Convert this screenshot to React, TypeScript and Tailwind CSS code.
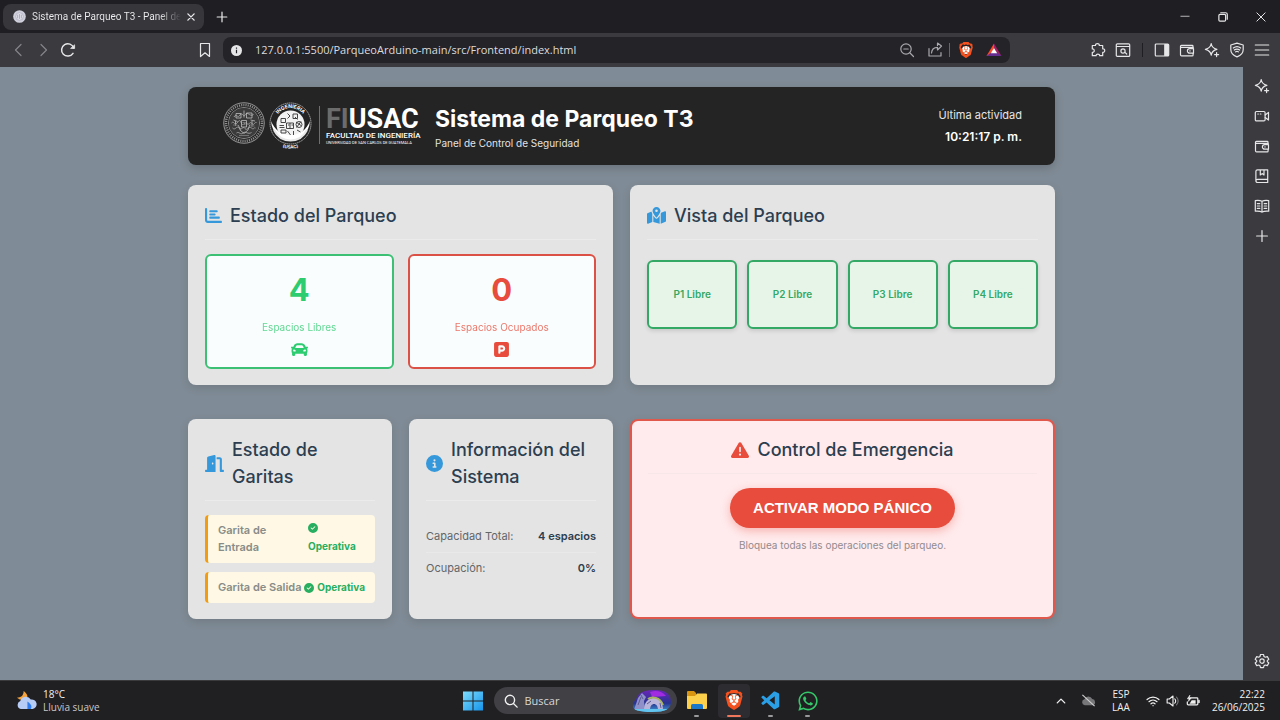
import type { ReactNode } from 'react';
import { FaCar } from 'react-icons/fa';
import {
  FaBrave,
  FaChartBar,
  FaCircleCheck,
  FaCircleInfo,
  FaDoorOpen,
  FaMapLocationDot,
  FaSquareParking,
  FaTriangleExclamation,
  FaWhatsapp,
} from 'react-icons/fa6';
import { VscVscode } from 'react-icons/vsc';

/* ---------- Line icons ---------- */

function Line({ children, className = 'size-4', width = 1.2 }: { children: ReactNode; className?: string; width?: number }) {
  return (
    <svg
      viewBox="0 0 16 16"
      className={className}
      fill="none"
      stroke="currentColor"
      strokeWidth={width}
      strokeLinecap="round"
      strokeLinejoin="round"
      aria-hidden="true"
    >
      {children}
    </svg>
  );
}

const SparkIcon = () => (
  <Line>
    <path d="M7.2 1.5C7.7 5 9 6.4 12.9 7.3 9 8.2 7.7 9.6 7.2 13.2 6.7 9.6 5.3 8.2 1.4 7.3 5.3 6.4 6.7 5 7.2 1.5Z" />
    <path d="M12.6 10.6v4M10.6 12.6h4" />
  </Line>
);

const WalletIcon = () => (
  <Line>
    <path d="M14 5.500V4.200a.8.8 0 0 0-.8-.8H2.400a.9.9 0 0 0-.9.9v8.400c0 .7.5 1.100 1.100 1.100h10.600a.9.9 0 0 0 .9-.9v-1.200M2 5.400h12.300M14.500 6.600h-3.800a2.200 2.200 0 0 0 0 4.600h3.800Z" />
    <path d="M10.900 8.900h.2" />
  </Line>
);

const PuzzleIcon = () => (
  <Line>
    <path d="M2.300 3.500h3.200c-.4-2.600 4.200-2.600 3.800 0h3.400v3.300c2.700-.4 2.700 4 0 3.600v3.300H9.600c.3-2.200-3.700-2.200-3.500 0H2.300v-3.300c2.600.3 2.600-3.800 0-3.500Z" />
  </Line>
);

const FindPageIcon = () => (
  <Line>
    <rect x="1.300" y="1.800" width="13.400" height="12.600" rx="1" />
    <path d="M1.500 4.500h13M10.200 10.600l1.500 1.400" />
    <circle cx="8" cy="9" r="2.100" />
  </Line>
);

const PanelIcon = () => (
  <Line>
    <rect x="1.300" y="2" width="13.400" height="12" rx="1" />
    <path d="M10.800 2.500h3.400v11h-3.400Z" fill="currentColor" />
  </Line>
);

const ShieldIcon = () => (
  <Line>
    <path d="M8 1.200 14.200 3v4.500c0 3.700-2.600 6-6.200 7.400-3.600-1.400-6.200-3.700-6.200-7.400V3Z" />
    <path d="M4.300 6c2.300-1.700 5.100-1.700 7.400 0M5.300 8c1.700-1.200 3.700-1.200 5.400 0M6.500 9.900c.9-.7 2.100-.7 3 0" />
  </Line>
);

const MenuIcon = () => (
  <Line>
    <path d="M1.300 3h13.400M1.300 8h13.400M1.300 13h13.400" />
  </Line>
);

const CameraIcon = () => (
  <Line>
    <rect x="1.300" y="3.500" width="9.800" height="9.400" rx="1.200" />
    <path d="M3.800 6h.6M6.300 6h.6M11.200 7l3.300-2.600v7.700l-3.300-2.500" />
  </Line>
);

const BookmarkBookIcon = () => (
  <Line>
    <path d="M3.400 1.800h10.300v12.700H3.600a1.600 1.600 0 0 1-1.700-1.700V3.300c0-.8.6-1.500 1.500-1.500ZM2 12.400c.2-.7.700-1.100 1.500-1.100h10.200M6.300 2v5l1.800-1.400L10 7V2" />
  </Line>
);

const ReaderIcon = () => (
  <Line>
    <path d="M8 3.200C6 2.300 3.500 2.300 1.300 2.600v10.600c2.300-.2 4.900-.1 6.700.9 1.800-1 4.400-1.100 6.700-.9V2.600C12.500 2.300 10 2.300 8 3.200Zm0 0v11M3.300 5.600h2.500M3.300 8h2.500M3.300 10.400h2.500M10.200 5.600h2.500M10.200 8h2.500M10.200 10.400h2.500" />
  </Line>
);

const PlusIcon = () => (
  <Line>
    <path d="M8 2.600v10.800M2.600 8h10.800" />
  </Line>
);

const GearIcon = () => (
  <Line>
    <path d="m6.500 1.500-.5 2-1.300.7-2-.6-1.500 2.600 1.500 1.400v1L1.200 10l1.500 2.600 2-.6 1.300.8.5 1.900h3l.5-1.900 1.300-.8 2 .6 1.500-2.600-1.500-1.400v-1l1.500-1.400-1.500-2.600-2 .6-1.300-.7-.5-2Z" />
    <circle cx="8" cy="8.100" r="2.200" />
  </Line>
);

function Brave({ className }: { className: string }) {
  return (
    <span className={`relative grid place-items-center text-[#f4511e] ${className}`}>
      <span className="absolute inset-x-1 inset-y-1 rounded-full bg-white" />
      <FaBrave className="relative size-full" />
    </span>
  );
}

/* ---------- Browser chrome ---------- */

function TabBar() {
  return (
    <div className="flex h-[33px] items-center bg-[#1f1e23] text-[#e8e8ea]">
      <div className="ml-[3px] flex h-[26px] w-[201px] items-center rounded-lg bg-[#37363b] pr-[7px] pl-2.5">
        <svg viewBox="0 0 14 14" className="size-[13px] shrink-0" aria-hidden="true">
          <circle cx="7" cy="7" r="6.800" fill="#cfcfdc" />
          <circle cx="7" cy="7" r="4.200" fill="#dedee8" stroke="#a9a9bd" strokeWidth=".7" />
          <path d="M5 5v4M7 4.500v5M9 5v4" stroke="#9c9cb3" strokeWidth=".8" />
        </svg>
        <span className="ml-1.5 flex-1 bg-gradient-to-r from-[#f0f0f2] from-85% to-transparent bg-clip-text font-[Roboto,sans-serif] text-[10px] whitespace-nowrap text-transparent">
          Sistema de Parqueo T3 - Panel de
        </span>
        <button type="button" aria-label="Cerrar pestaña" className="ml-1 grid size-4 place-items-center">
          <Line className="size-2.5" width={2.200}>
            <path d="m3 3 10 10M13 3 3 13" />
          </Line>
        </button>
      </div>
      <button type="button" aria-label="Nueva pestaña" className="ml-2.5 grid size-4 place-items-center">
        <Line className="size-3.5" width={1.400}>
          <path d="M8 2.500v11M2.500 8h11" />
        </Line>
      </button>
      <div className="ml-auto flex items-center gap-[22px] pr-[11px]">
        <button type="button" aria-label="Minimizar" className="grid size-4 place-items-center">
          <Line className="size-3" width={1}>
            <path d="M2.500 7h11" />
          </Line>
        </button>
        <button type="button" aria-label="Restaurar" className="grid size-4 place-items-center">
          <Line className="size-3" width={1.600}>
            <rect x="2.500" y="4.500" width="9" height="9" rx="1.500" />
            <path d="M5 2.300h6.500a2.200 2.200 0 0 1 2.200 2.200V11" />
          </Line>
        </button>
        <button type="button" aria-label="Cerrar" className="grid size-4 place-items-center">
          <Line className="size-3" width={1.300}>
            <path d="m2.500 2.500 11 11M13.500 2.500l-11 11" />
          </Line>
        </button>
      </div>
    </div>
  );
}

function Toolbar() {
  return (
    <div className="flex h-[34px] items-center bg-[#3b3a3f] text-[#e6e6e8]">
      <div className="flex w-[223px] items-center pr-[10px] pl-[11px]">
        <button type="button" aria-label="Atrás" className="text-[#85858a]">
          <Line>
            <path d="M10 2.500 4.500 8l5.500 5.500" />
          </Line>
        </button>
        <button type="button" aria-label="Adelante" className="ml-2 text-[#85858a]">
          <Line>
            <path d="M6 2.500 11.500 8 6 13.500" />
          </Line>
        </button>
        <button type="button" aria-label="Recargar" className="ml-[9px]">
          <Line width={1.500}>
            <path d="M13 11.300A6.200 6.200 0 1 1 13.700 6" />
            <path d="M11 6.400h3.600V3.200Z" fill="currentColor" strokeWidth=".8" />
          </Line>
        </button>
        <button type="button" aria-label="Marcador" className="ml-auto">
          <Line>
            <path d="M3.500 1.500h9v13L8 10.800l-4.500 3.700Z" />
          </Line>
        </button>
      </div>
      <div className="flex h-[26px] min-w-0 flex-1 items-center rounded-lg bg-[#242328] pr-2 pl-2">
        <svg viewBox="0 0 12 12" className="size-[11px] shrink-0" aria-hidden="true">
          <circle cx="6" cy="6" r="6" fill="#e6e6e8" />
          <path d="M6 5.200v3.800M6 2.700v1.300" stroke="#242328" strokeWidth="1.300" />
        </svg>
        <input
          type="text"
          aria-label="Dirección"
          defaultValue="127.0.0.1:5500/ParqueoArduino-main/src/Frontend/index.html"
          className="ml-[13px] min-w-0 flex-1 bg-transparent text-[11px] text-[#dcdcde] outline-none"
        />
        <button type="button" aria-label="Reducir zoom" className="text-[#a9a9ad]">
          <Line>
            <circle cx="7" cy="7" r="5.200" />
            <path d="m11 11 3.500 3.500M4.800 7h4.400" />
          </Line>
        </button>
        <button type="button" aria-label="Compartir" className="ml-3 text-[#a9a9ad]">
          <Line>
            <path d="M2 6.500V14h12v-3.500M4.500 11c.3-3.600 2.500-5.700 6-5.700V8l4-3.900-4-3v2.300" />
          </Line>
        </button>
        <span className="ml-1.5 h-3.5 w-px bg-[#66666a]" />
        <button type="button" aria-label="Brave Shields" className="ml-2">
          <Brave className="size-4" />
        </button>
        <button type="button" aria-label="Brave Rewards" className="ml-3">
          <svg viewBox="0 0 16 16" className="size-4" aria-hidden="true">
            <path d="M8 1.500 8 6 4.500 14H.5Z" fill="#ff4b2b" />
            <path d="M8 1.500 15.500 14l-4-2L8 6Z" fill="#9e1f63" />
            <path d="M.5 14h15l-4-3h-7Z" fill="#662d91" />
            <path d="m8 6 3.200 5.300H4.800Z" fill="#fff" />
          </svg>
        </button>
      </div>
      <div className="ml-20 flex items-center gap-[9px] pr-2.5">
        <button type="button" aria-label="Extensiones"><PuzzleIcon /></button>
        <button type="button" aria-label="Buscar en la página"><FindPageIcon /></button>
        <span className="mx-0.5 h-3.5 w-px bg-[#1f1e23]" />
        <button type="button" aria-label="Barra lateral"><PanelIcon /></button>
        <button type="button" aria-label="Cartera"><WalletIcon /></button>
        <button type="button" aria-label="Leo AI"><SparkIcon /></button>
        <button type="button" aria-label="VPN"><ShieldIcon /></button>
        <button type="button" aria-label="Menú"><MenuIcon /></button>
      </div>
    </div>
  );
}

function SideBar() {
  return (
    <aside className="flex w-[37px] shrink-0 flex-col items-center gap-3.5 bg-[#3b3a3f] py-[11px] text-[#e6e6e8]">
      <button type="button" aria-label="Leo AI"><SparkIcon /></button>
      <button type="button" aria-label="Brave Talk"><CameraIcon /></button>
      <button type="button" aria-label="Cartera"><WalletIcon /></button>
      <button type="button" aria-label="Marcadores"><BookmarkBookIcon /></button>
      <button type="button" aria-label="Lista de lectura"><ReaderIcon /></button>
      <button type="button" aria-label="Agregar"><PlusIcon /></button>
      <button type="button" aria-label="Ajustes" className="mt-auto"><GearIcon /></button>
    </aside>
  );
}

/* ---------- Header ---------- */

function UniversitySeal() {
  return (
    <svg viewBox="0 0 84 84" className="size-[42px]" fill="none" stroke="#b4b4b4" aria-hidden="true">
      <circle cx="42" cy="42" r="40.500" strokeWidth="1.600" />
      <circle cx="42" cy="42" r="36" strokeWidth="5" strokeDasharray="2.200 2.200" stroke="#8e8e8e" />
      <circle cx="42" cy="42" r="31" strokeWidth="1.400" />
      <circle cx="42" cy="42" r="30" fill="#3b3b3b" stroke="none" />
      <path
        d="M22 30c4-8 8 4 12-4s7 7 11-1 8 6 16 0M17 42c5-6 6 7 11 0s6-6 9 1 7-5 11 0 6-6 10 0 5-4 9-2M19 52c6 6 8-6 13 0s8-5 12 1 8-6 13-1 5-3 8 0M27 62c5-4 8 5 13 0s10 4 17-1"
        strokeWidth="2"
        stroke="#9a9a9a"
      />
      <path d="M26 23h10v9H26ZM47 22h11v10H47ZM37 37h10v13H37ZM25 38v10M58 38v11M33 55l9 8 9-8M21 36l8 3M55 36l9 2M42 17v14M30 46l5 9M54 45l-4 10" strokeWidth="1.500" stroke="#c4c4c4" />
      <path d="M20 46h9M55 48h8M39 41h6M39 45h6M32 67h20" strokeWidth="2" stroke="#727272" />
    </svg>
  );
}

function EngineeringSeal() {
  return (
    <svg viewBox="0 0 86 96" className="h-[48px] w-[43px]" aria-hidden="true">
      <defs>
        <path id="seal-top" d="M11 44a32 32 0 0 1 64 0" />
        <path id="seal-bottom" d="M20 89q23 8 46 0" />
      </defs>
      <circle cx="43" cy="43" r="41" fill="none" stroke="#d8d8d8" strokeWidth="1.400" strokeDasharray="3 1" />
      <text fill="#fff" fontSize="10" fontWeight="700" fontFamily="Inter, sans-serif">
        <textPath href="#seal-top" startOffset="50%" textAnchor="middle">INGENIERIA</textPath>
      </text>
      <circle cx="43" cy="45" r="28" fill="#f2f2f2" />
      <path d="M4 38c2 25 20 39 39 39s37-14 39-39c-7 17-20 28-39 28S11 55 4 38Z" fill="#fff" />
      <path d="M10 56c7 14 20 21 33 21s26-7 33-21" fill="none" stroke="#e8e8e8" strokeWidth="4" />
      <g fill="none" stroke="#333" strokeWidth="1.800">
        <path d="M24 33h9v8h-9ZM37 23l5 5-5 5M48 24h9v9h-9ZM52 30l5 5M21 47h9M21 51h10M24 56h10v6H24ZM35 42h14v11H35ZM42 42v11M38 46h3M45 46h3M54 40l10 7M64 39l-9 12M56 56l7 4M49 58v8M37 58l6 8" />
        <circle cx="60" cy="45" r="6" />
      </g>
      <text fill="#fff" fontSize="9" fontWeight="700" fontFamily="Inter, sans-serif">
        <textPath href="#seal-bottom" startOffset="50%" textAnchor="middle">(USAC)</textPath>
      </text>
    </svg>
  );
}

function Header() {
  return (
    <header className="flex h-[78px] items-center rounded-lg bg-[#242424] pr-[33px] pl-[35px] text-white shadow-[0_3px_10px_rgba(0,0,0,0.18)]">
      <div className="flex h-12 items-start">
        <UniversitySeal />
        <span className="ml-1 grid"><EngineeringSeal /></span>
        <span className="mt-1 ml-[7px] h-[38px] w-px bg-[#6f6f6f]" />
        <div className="mt-1 ml-1.5 w-[94px] font-[Roboto,sans-serif] whitespace-nowrap">
          <p className="text-[27px] leading-[26px] font-bold">
            <span className="text-[#6c6c6c]">FI</span>USAC
          </p>
          <p className="text-[8px] leading-[8px] font-medium">FACULTAD DE INGENIERÍA</p>
          <p className="text-[4px] leading-[5px]">UNIVERSIDAD DE SAN CARLOS DE GUATEMALA</p>
        </div>
      </div>
      <div className="ml-[15px] pt-1">
        <h1 className="text-[23px] leading-[30px] font-bold">Sistema de Parqueo T3</h1>
        <p className="text-[10px] leading-[18px] text-[#e2e2e2]">Panel de Control de Seguridad</p>
      </div>
      <div className="ml-auto text-right">
        <p className="text-[11px] leading-[22px] text-[#e6e6e6]">Última actividad</p>
        <p className="text-[12px] leading-[22px] font-semibold">10:21:17 p. m.</p>
      </div>
    </header>
  );
}

/* ---------- Cards ---------- */

const cardClass = 'flex min-h-[200px] flex-col rounded-lg shadow-[0_3px_10px_rgba(0,0,0,0.12)]';
const panelClass = 'bg-[#e4e4e4] px-[17px] pt-[17px] pb-4';

function CardTitle({ icon, children, className = 'border-[#ebebeb]' }: { icon: ReactNode; children: ReactNode; className?: string }) {
  return (
    <h2 className={`mb-3.5 flex items-center gap-2 border-b pb-2.5 text-[18px] leading-[27px] font-medium text-[#2c3e50] ${className}`}>
      <span className="shrink-0">{icon}</span>
      <span>{children}</span>
    </h2>
  );
}

function Stat({ value, label, icon, className }: { value: string; label: string; icon: ReactNode; className: string }) {
  return (
    <div className={`flex flex-1 flex-col items-center rounded-md border-2 bg-[#f9fdfd] pt-3 pb-[9px] ${className}`}>
      <strong className="text-[31px] leading-[44px] font-bold">{value}</strong>
      <span className="mt-1.5 text-[10px] leading-[18px] opacity-75">{label}</span>
      <span className="mt-[5px] text-[17px]">{icon}</span>
    </div>
  );
}

function Dashboard() {
  return (
    <main className="mx-auto w-full max-w-[867px] py-5 font-[Inter,sans-serif]">
      <Header />
      <div className="mt-5 grid grid-cols-4 gap-x-[17px] gap-y-[34px]">
        <section className={`col-span-2 ${panelClass} ${cardClass}`}>
          <CardTitle icon={<FaChartBar className="size-[17px] text-[#3498db]" />}>Estado del Parqueo</CardTitle>
          <div className="flex gap-3.5">
            <Stat value="4" label="Espacios Libres" icon={<FaCar />} className="border-[#3cc074] text-[#2ecc71]" />
            <Stat value="0" label="Espacios Ocupados" icon={<FaSquareParking />} className="border-[#dc5145] text-[#e74c3c]" />
          </div>
        </section>

        <section className={`col-span-2 ${panelClass} ${cardClass}`}>
          <CardTitle icon={<FaMapLocationDot className="size-[19px] text-[#3498db]" />}>Vista del Parqueo</CardTitle>
          <ul className="mt-1.5 grid grid-cols-4 gap-2.5">
            {['P1 Libre', 'P2 Libre', 'P3 Libre', 'P4 Libre'].map((slot) => (
              <li
                key={slot}
                className="grid h-[69px] place-items-center rounded-md border-2 border-[#34a865] bg-[#e7f5e9] text-[10px] font-semibold text-[#34a865] shadow-[0_2px_4px_rgba(0,0,0,0.12)]"
              >
                {slot}
              </li>
            ))}
          </ul>
        </section>

        <section className={`${panelClass} ${cardClass}`}>
          <CardTitle icon={<FaDoorOpen className="size-[19px] text-[#3498db]" />}>
            Estado de
            <br />
            Garitas
          </CardTitle>
          <div className="flex flex-col gap-[9px] text-[11px] leading-[17px]">
            <div className="flex items-center justify-between rounded border-l-3 border-[#f39c12] bg-[#fef8e4] px-2.5 py-[7px]">
              <span className="font-semibold text-[#888c88]">
                Garita de
                <br />
                Entrada
              </span>
              <span className="w-[57px] text-[10px] font-bold text-[#27ae60]">
                <FaCircleCheck className="mb-[5px]" />
                <span className="block">Operativa</span>
              </span>
            </div>
            <div className="flex items-center justify-between rounded border-l-3 border-[#f39c12] bg-[#fef8e4] px-2.5 py-[7px]">
              <span className="font-semibold whitespace-nowrap text-[#888c88]">Garita de Salida</span>
              <span className="flex items-center gap-[3px] text-[10px] font-bold text-[#27ae60]">
                <FaCircleCheck />
                Operativa
              </span>
            </div>
          </div>
        </section>

        <section className={`${panelClass} ${cardClass}`}>
          <CardTitle icon={<FaCircleInfo className="size-[17px] text-[#3498db]" />}>
            Información del
            <br />
            Sistema
          </CardTitle>
          <dl className="mt-1.5 text-[11px] leading-[17px]">
            <div className="flex justify-between border-b border-[#e9e9e9] py-[7px]">
              <dt className="text-[#636669]">Capacidad Total:</dt>
              <dd className="font-semibold text-[#2c3e50]">4 espacios</dd>
            </div>
            <div className="flex justify-between py-[7px]">
              <dt className="text-[#636669]">Ocupación:</dt>
              <dd className="font-semibold text-[#2c3e50]">0%</dd>
            </div>
          </dl>
        </section>

        <section className={`col-span-2 border-2 border-[#e0574c] bg-[#ffebed] px-4 pt-[15px] pb-4 text-center ${cardClass}`}>
          <CardTitle className="justify-center border-[#f7e7e9]" icon={<FaTriangleExclamation className="size-[18px] text-[#e74c3c]" />}>
            Control de Emergencia
          </CardTitle>
          <button
            type="button"
            className="mx-auto h-10 rounded-full bg-[#e74c3c] px-[23px] font-['Liberation_Sans',sans-serif] text-[15px] font-bold text-white shadow-[0_3px_10px_rgba(231,76,60,0.35)]"
          >
            ACTIVAR MODO PÁNICO
          </button>
          <p className="mt-2 text-[10px] leading-[18px] text-[#928a8e]">Bloquea todas las operaciones del parqueo.</p>
        </section>
      </div>
    </main>
  );
}

/* ---------- Desktop task bar ---------- */

function SearchArt() {
  return (
    <svg viewBox="0 0 40 22" className="h-[22px] w-10" aria-hidden="true">
      <defs>
        <linearGradient id="art-sky" x1="0" y1="0" x2="0" y2="1">
          <stop offset="0" stopColor="#6b25b8" />
          <stop offset=".6" stopColor="#27348f" />
          <stop offset="1" stopColor="#3d9bd6" />
        </linearGradient>
        <clipPath id="art-clip">
          <path d="M7 4Q12 0 22 0c14 0 17 6 17 12 0 7-6 10-19 10S0 20 1 15c0-3 3-5 6-11Z" />
        </clipPath>
      </defs>
      <g clipPath="url(#art-clip)">
        <rect width="40" height="22" fill="url(#art-sky)" />
        <path d="M18 2q10-3 16 4l-14 1Z" fill="#a12be0" />
        <path d="M2 20 6 8l4-5 4 4-2 4 1 9Z" fill="#8f90c9" />
        <path d="M12 20c0-7 3-11 9-12 7-1 10 5 10 12h-5c0-4-2-6-4-6s-4 2-4 6Z" fill="#b9b5da" />
        <path d="M16 9c4-3 12-2 15 6" stroke="#a7b562" strokeWidth="2" fill="none" />
        <path d="M6 15l3-8M9 5l2 4M15 14l4-3M28 13l1 5" stroke="#5e5b94" />
        <path d="M0 19h40v3H0Z" fill="#63c4ee" />
      </g>
    </svg>
  );
}

function TaskItem({ label, active = false, children }: { label: string; active?: boolean; children: ReactNode }) {
  return (
    <button
      type="button"
      aria-label={label}
      className={`flex h-[34px] w-8 flex-col items-center justify-between rounded pt-1.5 pb-px ${active ? 'bg-[#2d2c31]' : ''}`}
    >
      {children}
      <span className={`h-[2px] rounded-full ${active ? 'w-3.5 bg-[#f0765c]' : 'w-[5px] bg-[#9a9a9d]'}`} />
    </button>
  );
}

function TaskBar() {
  return (
    <footer className="grid h-10 grid-cols-[1fr_auto_1fr] items-center border-t border-[#3a3a3d] bg-[#201f22] text-[10px] leading-[13px] text-[#f0f0f0]">
      <div className="flex items-center gap-1.5 pl-4">
        <svg viewBox="0 0 22 22" className="size-[21px]" aria-hidden="true">
          <path d="M8 1c4 3 5 6 3 9H4L1 8c4 0 7-2 7-7Z" fill="#f5a33c" />
          <path d="M5 20a4.500 4.500 0 0 1-.5-8.500A6 6 0 0 1 15.500 10a5 5 0 0 1 2 10Z" fill="#b7cdf6" />
          <path d="M12 12c4 3 5 5 3.500 8H12Z" fill="#2f7df0" />
        </svg>
        <div>
          <p>18°C</p>
          <p className="text-[#c9c9c9]">Lluvia suave</p>
        </div>
      </div>

      <nav className="flex items-center pl-1.5" aria-label="Aplicaciones">
        <button type="button" aria-label="Inicio">
          <svg viewBox="0 0 20 20" className="size-5" aria-hidden="true">
            <defs>
              <linearGradient id="win" x1="0" y1="0" x2="1" y2="1">
                <stop offset="0" stopColor="#7fdcfb" />
                <stop offset="1" stopColor="#1594ea" />
              </linearGradient>
            </defs>
            <path d="M0 .5h9.500v9H0ZM10.500.5H20v9h-9.500ZM0 10.500h9.500v9H0ZM10.500 10.500H20v9h-9.500Z" fill="url(#win)" />
          </svg>
        </button>
        <label className="ml-[11px] flex h-[27px] w-[183px] items-center rounded-full bg-[#414045] pr-[5px] pl-2.5">
          <Line className="size-3.5 shrink-0" width={1.600}>
            <circle cx="6.800" cy="6.800" r="5.300" />
            <path d="m10.800 10.800 4.200 4.200" />
          </Line>
          <input
            type="search"
            aria-label="Buscar"
            placeholder="Buscar"
            className="ml-[7px] min-w-0 flex-1 bg-transparent text-[11px] outline-none placeholder:text-[#d8d8d8]"
          />
          <SearchArt />
        </label>
        <div className="ml-1 flex gap-[5px]">
          <TaskItem label="Explorador de archivos">
            <svg viewBox="0 0 22 20" className="h-5 w-[22px]" aria-hidden="true">
              <path d="M1 2a1 1 0 0 1 1-1h6l2 2v4H1Z" fill="#d9950f" />
              <path d="M1 6h8l2-2.500h9a1 1 0 0 1 1 1V18a1 1 0 0 1-1 1H2a1 1 0 0 1-1-1Z" fill="#fcd04a" />
              <path d="M5 19v-3.500A1.500 1.500 0 0 1 6.500 14h9a1.500 1.500 0 0 1 1.500 1.500V19Z" fill="#1b77c9" />
            </svg>
          </TaskItem>
          <TaskItem label="Brave" active>
            <Brave className="size-5" />
          </TaskItem>
          <TaskItem label="Visual Studio Code">
            <VscVscode className="size-[22px] text-[#2b9fe6]" />
          </TaskItem>
          <TaskItem label="WhatsApp">
            <FaWhatsapp className="size-[22px] text-[#35c86a]" />
          </TaskItem>
        </div>
      </nav>

      <div className="flex items-center justify-end pr-[15px]">
        <button type="button" aria-label="Iconos ocultos">
          <Line className="size-3" width={1.800}>
            <path d="m3 10.500 5-5 5 5" />
          </Line>
        </button>
        <svg viewBox="0 0 16 16" className="ml-3.5 size-[15px]" aria-hidden="true">
          <path d="M4 13a3.200 3.200 0 0 1-.3-6.300A4.500 4.500 0 0 1 12 6.500 3.300 3.300 0 0 1 12.500 13Z" fill="#77777a" />
          <path d="m1.500 2 13 12" stroke="#d0d0d0" strokeWidth="1.200" />
        </svg>
        <p className="ml-4 text-center">
          ESP
          <br />
          LAA
        </p>
        <div className="ml-4 flex items-center gap-1.5">
          <Line className="size-3.5" width={1.400}>
            <path d="M1.200 6.300c4-3.700 9.600-3.700 13.600 0M3.400 8.800c2.700-2.500 6.500-2.500 9.200 0M5.700 11.200c1.400-1.200 3.200-1.200 4.600 0M8 13.300h.1" />
          </Line>
          <Line className="size-3.5" width={1.300}>
            <path d="M1.300 5.700h2.500L8 2.300v11.400l-4.200-3.400H1.300ZM10 5.500c1.400 1.300 1.400 3.700 0 5" />
            <path d="M12 3.500c2.500 2.500 2.500 6.500 0 9" stroke="#77777a" />
          </Line>
          <Line className="size-3.5" width={1.400}>
            <path d="M5 4.500h7.500a1 1 0 0 1 1 1v6a1 1 0 0 1-1 1h-10a1 1 0 0 1-1-1V9M15 7.300v2.400" />
            <path d="M6.500 7H11v4H4Z" fill="currentColor" stroke="none" />
            <path d="M4.300 1.500 1.500 5.500h2L2.700 8.500 6 4.500H4Z" fill="currentColor" strokeWidth=".6" />
          </Line>
        </div>
        <p className="ml-3 text-right">
          22:22
          <br />
          26/06/2025
        </p>
      </div>
    </footer>
  );
}

export default function App() {
  return (
    <div className="flex min-h-screen flex-col bg-[#7f8b96] font-['Open_Sans','Noto_Sans',sans-serif]">
      <TabBar />
      <Toolbar />
      <div className="flex flex-1">
        <div className="min-w-0 flex-1">
          <Dashboard />
        </div>
        <SideBar />
      </div>
      <TaskBar />
    </div>
  );
}
